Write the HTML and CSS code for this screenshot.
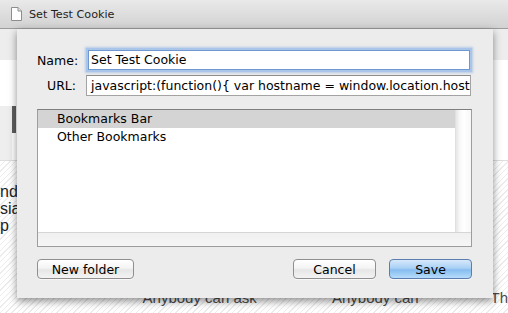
FILE: index.html
```html
<!DOCTYPE html>
<html>
<head>
	<title>Set Test Cookie</title>
	<link rel="stylesheet" href="styles.css">
</head>
<body>
	<div class='titlebar'>
		<svg class='docicon' width='11' height='14' viewBox='0 0 11 14'>
			<path d='M0.5 0.5 H7 L10.5 4 V13.5 H0.5 Z' fill='#fdfdfd' stroke='#8d8d8d'/>
			<path d='M7 0.5 V4 H10.5' fill='#e4e4e4' stroke='#8d8d8d'/>
		</svg>
		<span class='title'>Set Test Cookie</span>
	</div>

	<div class='page'>
		<div class='site-top'></div>
		<div class='site-nav'>
			<div class='nav-side'><div class='nav-tab'></div></div>
		</div>
		<div class='site-body'>
			<div class='col-left'>
				<div>nd</div>
				<div>sias</div>
				<div>p</div>
			</div>
			<div class='col-mid'>
				<div class='pitch'>Anybody can ask</div>
			</div>
			<div class='col-mid2'>
				<div class='pitch'>Anybody can</div>
			</div>
			<div class='col-right'>
				<div class='pitch'>Th</div>
			</div>
		</div>

		<div class='sheet'>
			<div class='fields'>
				<label class='lbl'>Name:</label>
				<div class='field focused'>Set Test Cookie</div>
				<label class='lbl'>URL:</label>
				<div class='field'>javascript:(function(){ var hostname = window.location.hostname; document.cookie = 'test=1; domain=' + hostname; })();</div>
			</div>

			<div class='tree'>
				<div class='tree-main'>
					<div class='rows'>
						<div class='row selected'>Bookmarks Bar</div>
						<div class='row'>Other Bookmarks</div>
					</div>
					<div class='vscroll'></div>
				</div>
				<div class='hscroll'></div>
			</div>

			<div class='actions'>
				<button class='btn'>New folder</button>
				<div class='spacer'></div>
				<button class='btn'>Cancel</button>
				<button class='btn primary'>Save</button>
			</div>
		</div>
	</div>
</body>
</html>
```

FILE: styles.css
```css
body {
	margin: 0;
	width: 508px;
	height: 313px;
	overflow: hidden;
	background-color: #fff;
	font-family: "DejaVu Sans", sans-serif;
}

.titlebar {
	display: flex;
	align-items: center;
	background: linear-gradient(#e9e9e9, #d2d2d2);
	border-bottom: 1px solid #9c9c9c;
	box-sizing: border-box;
	height: 29px;
	padding-left: 11px;
}

.docicon {
	display: block;
	margin-right: 7px;
}

.title {
	font-size: 11.2px;
	color: #1e1e1e;
	padding-top: 1px;
}

.page {
	position: relative;
	height: 284px;
}

.site-top {
	height: 31px;
	background-color: #ededed;
}

.site-nav {
	height: 100px;
	background-color: #fff;
	display: flex;
	align-items: flex-end;
}

.nav-side {
	width: 12px;
	height: 54px;
	background-color: #eeeeee;
	position: relative;
}

.nav-tab {
	position: absolute;
	left: 12px;
	top: 0;
	width: 4px;
	height: 27px;
	background-color: #5e5e5e;
}

.site-body {
	height: 153px;
	border-top: 1px solid #dedede;
	background: repeating-linear-gradient(135deg, #ffffff 0 3px, #ececec 3px 4px);
	display: flex;
	font-family: "Liberation Sans", Arial, sans-serif;
	color: #3a3a3a;
}

.col-left {
	width: 143px;
	padding-top: 22px;
	font-size: 16px;
	line-height: 17px;
	color: #222;
}

.col-mid {
	width: 190px;
	padding-top: 128px;
}

.col-mid2 {
	width: 159px;
	padding-top: 128px;
}

.col-right {
	padding-top: 128px;
}

.pitch {
	font-size: 15px;
	color: #4c4c4c;
}

.sheet {
	position: absolute;
	left: 17px;
	top: 0;
	width: 476px;
	height: 269px;
	box-sizing: border-box;
	background-color: #ececec;
	box-shadow: 0 3px 8px rgba(0, 0, 0, 0.45);
	padding: 20px 21px 0 20px;
	font-size: 12.5px;
	color: #000;
}

.fields {
	display: grid;
	grid-template-columns: 39px 1fr;
	column-gap: 10px;
	row-gap: 4px;
	align-items: center;
}

.lbl {
	text-align: right;
	white-space: nowrap;
}

.field {
	height: 21px;
	box-sizing: border-box;
	border: 1px solid #a3a3a3;
	border-top-color: #8c8c8c;
	background-color: #fff;
	padding: 2px 4px 0 4px;
	white-space: nowrap;
	overflow: hidden;
	margin-right: 1px;
}

.field.focused {
	height: 20px;
	margin: 1px 2px 1px 2px;
	padding: 1px 2px 0 2px;
	border-color: #6f98cf;
	box-shadow: 0 0 0 2px #a9c6ea, 0 0 2px 3px rgba(130, 170, 225, 0.5);
}

.tree {
	margin-top: 13px;
	height: 138px;
	box-sizing: border-box;
	border: 1px solid #9d9d9d;
	border-top-color: #7f7f7f;
	background-color: #fff;
	display: flex;
	flex-direction: column;
}

.tree-main {
	flex: 1;
	display: flex;
}

.rows {
	flex: 1;
}

.row {
	height: 18px;
	line-height: 18px;
	padding-left: 19px;
}

.row.selected {
	background-color: #d4d4d4;
}

.vscroll {
	width: 15px;
	background: linear-gradient(90deg, #e6e6e6, #f9f9f9 4px, #ffffff 8px, #f7f7f7);
	border-left: 1px solid #e0e0e0;
}

.hscroll {
	height: 13px;
	border-top: 1px solid #d6d6d6;
	background: linear-gradient(#f0f0f0, #f6f6f6);
}

.actions {
	margin-top: 12px;
	display: flex;
	gap: 13px;
}

.spacer {
	flex: 1;
}

.btn {
	height: 20px;
	width: 83px;
	box-sizing: border-box;
	border: 1px solid #8f8f8f;
	border-radius: 4px;
	background: linear-gradient(#ffffff, #f4f4f4 45%, #e6e6e6 55%, #f3f3f3);
	font-family: "DejaVu Sans", sans-serif;
	font-size: 12.5px;
	color: #000;
	padding: 0;
	box-shadow: 0 1px 0 rgba(255, 255, 255, 0.6);
}

.btn:first-child {
	width: 97px;
}

.btn.primary {
	border-color: #5b7eae;
	background: linear-gradient(#d6e9fb, #a9d0f5 45%, #86bdf0 55%, #b6dcfa);
}
```
